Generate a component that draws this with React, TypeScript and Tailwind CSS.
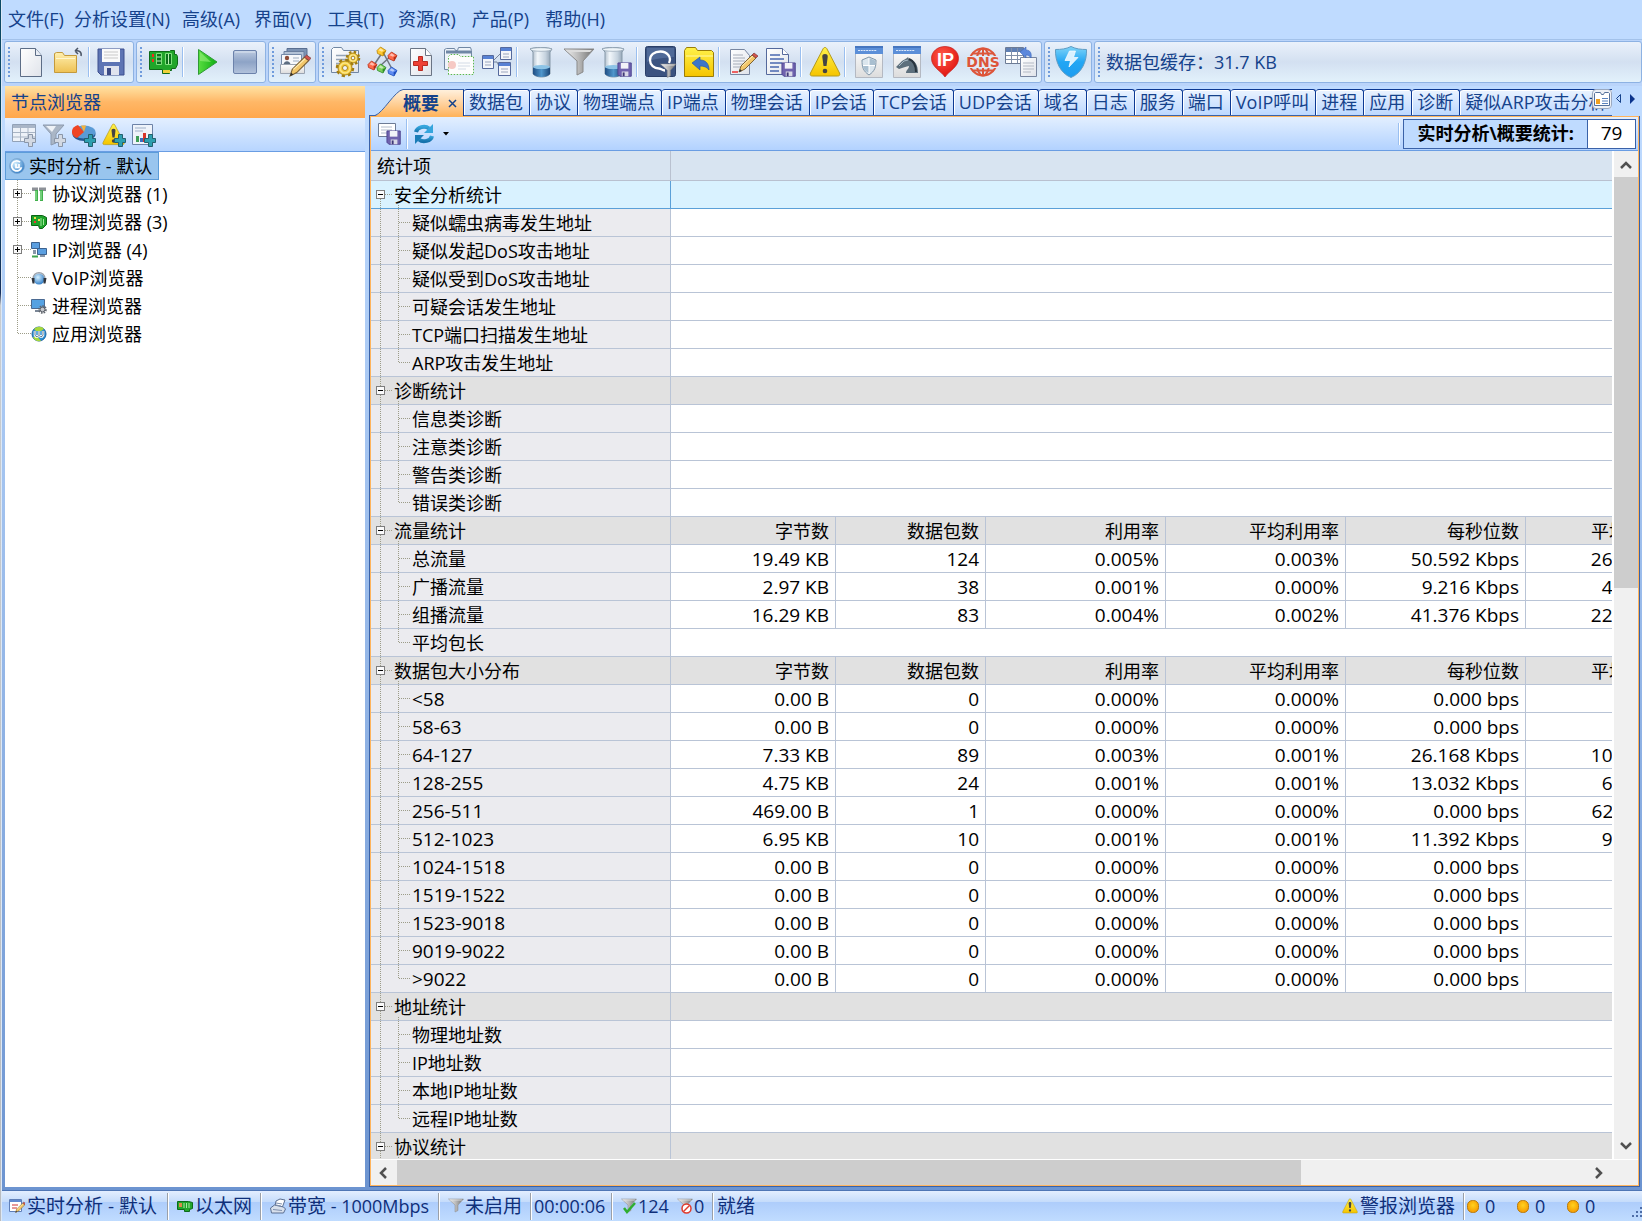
import React from "react";

type P = { children: React.ReactNode; s?: number };
const I = ({ children, s = 32 }: P) => (
  <svg width={s} height={s} viewBox={`0 0 ${s} ${s}`} fill="none" className="block shrink-0" aria-hidden="true">
    {children}
  </svg>
);

const Defs = () => (
  <svg width="0" height="0" className="absolute" aria-hidden="true">
    <defs>
      <linearGradient id="paper" x1="0" y1="0" x2="1" y2="1"><stop offset="0" stopColor="#fff" /><stop offset="1" stopColor="#dfe3ea" /></linearGradient>
      <linearGradient id="fold" x1="0" y1="0" x2="0" y2="1"><stop offset="0" stopColor="#fff0b0" /><stop offset="1" stopColor="#eec153" /></linearGradient>
      <linearGradient id="yel" x1="0" y1="0" x2="0" y2="1"><stop offset="0" stopColor="#fff24a" /><stop offset="1" stopColor="#f5c400" /></linearGradient>
      <linearGradient id="metal" x1="0" y1="0" x2="1" y2="0"><stop offset="0" stopColor="#f4f4f4" /><stop offset=".5" stopColor="#b8b8b8" /><stop offset="1" stopColor="#6f6f6f" /></linearGradient>
      <linearGradient id="glass" x1="0" y1="0" x2="1" y2="0"><stop offset="0" stopColor="#8fa2b4" /><stop offset=".35" stopColor="#f2f7fb" /><stop offset=".7" stopColor="#c6d3df" /><stop offset="1" stopColor="#8497aa" /></linearGradient>
      <linearGradient id="water" x1="0" y1="0" x2="1" y2="0"><stop offset="0" stopColor="#1f4e84" /><stop offset=".5" stopColor="#4f96cc" /><stop offset="1" stopColor="#1b4678" /></linearGradient>
      <linearGradient id="stop" x1="0" y1="0" x2="0" y2="1"><stop offset="0" stopColor="#bccae0" /><stop offset=".5" stopColor="#8da3c6" /><stop offset="1" stopColor="#b3c3dc" /></linearGradient>
      <linearGradient id="play" x1="0" y1="0" x2="1" y2="0"><stop offset="0" stopColor="#58dd40" /><stop offset="1" stopColor="#0fae14" /></linearGradient>
      <linearGradient id="sky" x1="0" y1="0" x2="0" y2="1"><stop offset="0" stopColor="#7fd4f8" /><stop offset=".5" stopColor="#22a6f4" /><stop offset="1" stopColor="#1d9cf0" /></linearGradient>
      <linearGradient id="win" x1="0" y1="0" x2="0" y2="1"><stop offset="0" stopColor="#fff" /><stop offset="1" stopColor="#dcdcdc" /></linearGradient>
      <linearGradient id="swirl" x1="0" y1="0" x2="0" y2="1"><stop offset="0" stopColor="#35a5dd" /><stop offset="1" stopColor="#1673ad" /></linearGradient>
      <radialGradient id="red" cx=".4" cy=".3" r=".7"><stop offset="0" stopColor="#ff5a4a" /><stop offset="1" stopColor="#e0140f" /></radialGradient>
      <radialGradient id="ball" cx=".4" cy=".35" r=".7"><stop offset="0" stopColor="#d6f1ff" /><stop offset="1" stopColor="#2a78c4" /></radialGradient>
      <radialGradient id="dot" cx=".5" cy=".4" r=".6"><stop offset="0" stopColor="#ffd21f" /><stop offset="1" stopColor="#f79a00" /></radialGradient>
    </defs>
  </svg>
);

/* reusable drawing fragments */
const Floppy = ({ x = 0, y = 0, k = 1, c = "#6f62ae" }) => (
  <g transform={`translate(${x} ${y}) scale(${k})`}>
    <path d="M1 1h14v14H3L1 13z" fill={c} stroke="#4d4490" />
    <path d="M4 1h8v6H4z" fill="#f2f2f8" />
    <path d="M5 10h7v5H5z" fill="#d8d8e6" />
    <path d="M6 11h2v4H6z" fill="#3d3775" />
  </g>
);
const Pencil = ({ x = 0, y = 0, k = 1 }) => (
  <g transform={`translate(${x} ${y}) scale(${k})`}>
    <path d="M1 19l2-6L14 2l4 3L7 16z" fill="#f3c76a" stroke="#7d6233" />
    <path d="M4 13L15 3" stroke="#fff0b8" />
    <path d="M14 2l2-2 4 3-2 2z" fill="#d2544c" stroke="#7d3a3a" strokeWidth=".7" />
    <path d="M1 19l1-3 2 2z" fill="#333" />
  </g>
);
const Gear = ({ x, y, r }: { x: number; y: number; r: number }) => (
  <g transform={`translate(${x} ${y})`}>
    <circle r={r} stroke="#a07c10" strokeWidth="2.5" strokeDasharray={`${r * 0.4} ${r * 0.385}`} />
    <circle r={r - 1} fill="#f4cc3c" stroke="#ad8618" />
    <circle r={r - 3} stroke="#fbe68a" strokeWidth="1.5" />
    <circle r={r / 3.2} fill="#eef3fa" stroke="#ad8618" />
  </g>
);
const Cube = ({ x, y, c, d }: { x: number; y: number; c: string; d: string }) => (
  <g transform={`translate(${x} ${y})`}>
    <path d="M0 3.500L3.500 0 9 3.500 6 9 .5 6.500z" fill={c} stroke={d} strokeWidth=".8" />
    <path d="M5.500 5.500l3.500-2L6 9z" fill={d} />
    <path d="M1.500 3.200l2-2 3 2-1.500 1.500z" fill="#fff" opacity=".55" />
  </g>
);
const Funnel = ({ x = 0, y = 0, k = 1 }) => (
  <g transform={`translate(${x} ${y}) scale(${k})`}>
    <path d="M1 2h30L20 14v11l-6 3V14z" fill="url(#metal)" stroke="#8a8a8a" />
    <path d="M3 3h26l-2 2H5z" fill="#dcdcdc" />
  </g>
);
const Beaker = ({ x = 0 }) => (
  <g transform={`translate(${x} 0)`}>
    <path d="M3 3c3-2 18-2 22 0l-2 3v22c-3 4-14 4-17 0V6z" fill="url(#glass)" stroke="#8598a8" />
    <path d="M6 21c4 2 13 2 17 0v7c-3 4-14 4-17 0z" fill="url(#water)" />
    <ellipse cx="14.5" cy="21" rx="8.5" ry="2" fill="#8cc3e6" />
    <ellipse cx="14" cy="3.5" rx="10.5" ry="1.8" fill="#eef4f8" stroke="#93a5b5" strokeWidth=".7" />
  </g>
);
const Warn = ({ k = 1 }) => (
  <g transform={`scale(${k})`}>
    <path d="M16 1.500c1 0 1.500.5 2 1.500L30.500 27c.8 2 0 3-2 3h-25c-2 0-2.800-1-2-3L14 3C14.500 2 15 1.500 16 1.500z" fill="url(#yel)" stroke="#b59a1c" />
    <path d="M16 8c2 0 3 1 2.700 3L17.500 20h-3L13.300 11C13 9 14 8 16 8z" fill="#444" />
    <circle cx="16" cy="25" r="2.300" fill="#444" />
  </g>
);
const Win = ({ x, y, w = 12, h = 13 }: { x: number; y: number; w?: number; h?: number }) => (
  <g transform={`translate(${x} ${y})`}>
    <path d={`M.5.5h${w}v${h}h-${w}z`} fill="#f4f6fa" stroke="#55699c" />
    <path d={`M1 1h${w - 1}v3H1z`} fill="#5781d4" />
    <path d={`M3 7h${w - 5}M3 10h${w - 5}`} stroke="#9aa5bd" />
  </g>
);

const NewDoc = () => <I><path d="M5.500 2.500h15l6 7v21h-21z" fill="url(#paper)" stroke="#5c6d86" /><path d="M20.500 2.500v7h6" fill="#e8edf5" stroke="#5c6d86" /></I>;
const OpenDoc = () => <I><path d="M1.500 26.500v-19l2-1h6l2 3h12v17z" fill="url(#fold)" stroke="#c49a3c" /><path d="M3 12.500h19" stroke="#fff6cf" /><path d="M28 10c1-4-2-6-6-5m0 0l3-3m-3 3l3 3" stroke="#4b5566" strokeWidth="1.500" /></I>;
const Save = () => <I><path d="M1 3h26v26H4l-3-3z" fill="#5d74b4" stroke="#3d4f8e" /><path d="M5 3h18v13H5z" fill="#fafafa" /><path d="M7 6h14M7 9h14M7 12h14" stroke="#c8c8c8" /><path d="M7 20h15v9H7z" fill="#dfe3ee" /><path d="M10 22h4v7h-4z" fill="#3a4a86" /></I>;
const Card = () => <I><path d="M2.500 5.500h20l1-1h4v4h2l1 2v8l-2 4h-4v2h-2v3h-7v-4h-13z" fill="#21a52a" stroke="#0e6a18" /><path d="M16 24h7v3h-7z" fill="#efd13a" /><path d="M5 8h2v3H5zM5 13h2v3H5z" fill="#f42a1c" /><path d="M9.500 7.500h5v11h-5zM18.500 7.500h6v11h-6z" fill="#0c6f1c" stroke="#7ee17c" /><path d="M10 11h4M10 15h4M21.500 8v10" stroke="#b9f0b2" /></I>;
const Play = () => <I><path d="M7.500 3.500L26 16 7.500 28.500z" fill="url(#play)" stroke="#2f9a35" /><path d="M9 6v9l11 1z" fill="#9bf07e" opacity=".6" /></I>;
const Stop = () => <I><rect x="4.500" y="4.500" width="23" height="23" rx="1.500" fill="url(#stop)" stroke="#6c82ab" /><path d="M6 6h20" stroke="#dde6f2" /></I>;
const Contacts = () => <I><path d="M8 2.500h20v13H8z" fill="#7c93b4" stroke="#5a6f91" /><path d="M5 5.500h20v14H5z" fill="#b3c2d6" stroke="#6a7f9f" /><path d="M2.500 8.500h20v12h-20z" fill="#f6f8fb" stroke="#7489a8" /><path d="M14 12h6M14 15h6" stroke="#9dacbf" /><circle cx="8" cy="12" r="2.200" fill="#8d4d3a" /><path d="M4.500 19c0-5 7-5 7 0z" fill="#5d6d80" /><path d="M1.500 18.500h24v9h-24z" fill="url(#win)" stroke="#9aa4b2" /><Pencil x={10} y={9} k={1.100} /></I>;
const Gears = () => <I><path d="M2.500 26.500v-23l2-2h8l2 3h15v22z" fill="url(#paper)" stroke="#7187a3" /><path d="M7 9.500h15M7 13.500h12M7 17.500h7M7 21.500h5" stroke="#93a3b7" strokeWidth="1.500" /><Gear x={24} y={12} r={6} /><Gear x={16} y={22} r={8} /></I>;
const Cubes = () => <I><path d="M15 7L7 19m10-11l8 15M25 9L13 20" stroke="#6d7480" strokeWidth="1.500" /><Cube x={10} y={1} c="#ffc930" d="#b98508" /><Cube x={21} y={6} c="#ff6a4c" d="#b32d17" /><Cube x={1} y={15} c="#ff6a4c" d="#b32d17" /><Cube x={10} y={18} c="#7cd05a" d="#2d8a2a" /><Cube x={21} y={21} c="#5f8cf2" d="#1c4dbb" /></I>;
const PlusDoc = () => <I><path d="M5.500 2.500h15l6 7v20h-21z" fill="url(#paper)" stroke="#6a7484" /><path d="M20.500 2.500v7h6" fill="#fff" stroke="#6a7484" /><path d="M13.500 10.500h4v5h5v4h-5v5h-4v-5h-5v-4h5z" fill="#ee4034" stroke="#b92a20" /></I>;
const Cards = () => <I><path d="M1.500 23.500v-20l2-1h8l1 2h2l1-3h12l1 3v20z" fill="#eef3f9" stroke="#7187a3" /><path d="M3 6h25" stroke="#6f87a5" strokeWidth="3" /><path d="M5.500 28.500v-18l2-2h8l2 2h13v18z" fill="#fdfdfd" stroke="#5cb84d" strokeDasharray="1.500 1.500" /><circle cx="9" cy="19" r="4" fill="#f6c9c4" /><path d="M15 17h12M15 20h12M15 23h8" stroke="#d3dbe6" /></I>;
const Wins = () => <I><path d="M11 16l9-9M11 16h5l4 8" stroke="#77849a" /><Win x={1} y={9} w={11} h={13} /><Win x={19} y={1} w={11} h={12} /><Win x={17} y={16} w={12} h={13} /></I>;
const BeakerI = () => <I><Beaker x={2} /></I>;
const FunnelI = () => <I><Funnel y={1} /></I>;
const BeakerSave = () => <I><Beaker x={-2} /><Floppy x={16} y={16} k={0.950} /></I>;
const Chat = () => <I><rect x=".5" y=".5" width="30" height="30" rx="2" fill="#3b5380" stroke="#2a3f68" /><path d="M2 2h27v9C19 12 10 12 2 16z" fill="#5f79a8" opacity=".6" /><path d="M24 17c3-6-2-11.500-8.500-11.500S5 9 5 14s4 8.500 9 8.500c2 0 3 2 6 2" stroke="#fff" strokeWidth="2.300" /><Funnel x={15} y={17} k={0.520} /></I>;
const BackFolder = () => <I><path d="M1.500 30.500v-26l2-3h9l2 3h14l2 2v24z" fill="url(#yel)" stroke="#9a7d08" /><path d="M3 10h27" stroke="#fff9a8" /><path d="M9 17l8-6v3c6 0 9 4 9 10-2-3-5-4-9-4v4z" fill="#3d76c8" stroke="#2a5aa6" strokeWidth=".7" /></I>;
const DocPencil = () => <I><path d="M3.500 3.500h14l5 6v19h-19z" fill="url(#paper)" stroke="#7886a0" /><path d="M6 9h10M6 12h12M6 15h12M6 18h10M6 21h8" stroke="#a6acb8" /><path d="M5 26h6" stroke="#e33" strokeWidth="1.500" /><Pencil x={11} y={7} k={1} /></I>;
const DocSave = () => <I><path d="M1.500 2.500h16l6 6v20h-22z" fill="url(#paper)" stroke="#55699c" /><path d="M17.500 2.500v6h6" fill="#fff" stroke="#55699c" /><path d="M5 9h10M5 13h14M5 17h12M5 21h9M5 25h9" stroke="#4a68b0" strokeWidth="1.500" /><Floppy x={16} y={16} k={0.950} /></I>;
const WarnI = () => <I><Warn /></I>;
const WinBase = () => <><path d="M2.500 .5h27v31h-27z" fill="url(#win)" stroke="#b4b9c2" /><path d="M2 0h28v8H2z" fill="#5c8fd8" /><path d="M2 0h28v2H2z" fill="#4676c0" /><path d="M5 4.500h19" stroke="#dbe8fa" strokeDasharray="2 .7" /></>;
const ShieldWin = () => <I><WinBase /><path d="M16 11l7 3c0 7-1 11-7 15-6-4-7-8-7-15z" fill="#dbe6ee" stroke="#8197aa" /><path d="M16 12l6 2.500V19h-6zM10 20h6v7c-4-2-5-4-6-7z" fill="#a9bfd0" /><path d="M16 12v16M10 19.500h12" stroke="#fff" /></I>;
const Horse = () => <I><WinBase /><path d="M5 21l6-6 5-3 1-1 1 2c6 1 9 6 9 14H15c0-3 3-4 3-7-3 1-5 1-7 2l-3 1z" fill="#5d6f7c" /><path d="M18 13c5 2 7 6 7 13" stroke="#28343e" strokeWidth="2" /><path d="M8 20l5-5 4-1" stroke="#a9bac6" /></I>;
const IPPin = () => <I><path d="M16 31C12 25 2.500 21 2.500 12.500 2.500 5 9 .5 16 .5s13.500 4.500 13.500 12C29.500 21 20 25 16 31z" fill="url(#red)" stroke="#c3201c" strokeWidth=".7" /><text x="16.500" y="20" textAnchor="middle" fontSize="18" fontWeight="700" fill="#fff" fontFamily="Liberation Sans, sans-serif">IP</text></I>;
const DNS = () => <I><circle cx="16" cy="16" r="13.500" stroke="#dd553a" strokeWidth="2" /><ellipse cx="16" cy="16" rx="6.500" ry="13.500" stroke="#dd553a" strokeWidth="2" /><path d="M16 2v28M5 7.500h22M5 24.500h22" stroke="#dd553a" strokeWidth="2" /><path d="M0 10h32v12H0z" fill="#e2eaf5" /><text x="16" y="21" textAnchor="middle" fontSize="14" fontWeight="700" fill="#dd553a" fontFamily="DejaVu Sans, sans-serif">DNS</text></I>;
const TableDoc = () => <I><path d="M.5 1.500h18v16H.5z" fill="#fff" stroke="#6d7b95" /><path d="M1 2h17v4H1z" fill="#5f7fb4" /><path d="M1 9.500h17M1 13.500h17M6.500 2v15M12.500 2v15" stroke="#8291aa" /><path d="M15.500 11.500h16v19h-16z" fill="url(#paper)" stroke="#7886a0" /><path d="M18 17h11M18 20h11M18 23h11M18 26h8" stroke="#b3b9c4" /><path d="M15 6l6-5v3c4 0 6 3 5 8-1-2-3-3-5-3v3z" fill="#5c88dc" stroke="#3c66b8" strokeWidth=".6" /></I>;
const BlueShield = () => <I><path d="M16 .5c5 2.500 10 3 15.500 3C32 15 27 27 16 31.500 5 27 0 15 .5 3.500 6 3.500 11 3 16 .5z" fill="url(#sky)" stroke="#5f9cc4" /><path d="M14.500 5h6l-2 6.500h4.500L14 21l1.500-6.500H10z" fill="#d9f1ff" stroke="#fff" strokeWidth=".7" /></I>;

const toolGroups: { items: ([string, React.FC] | null)[] }[] = [
  { items: [["新建", NewDoc], ["打开", OpenDoc], null, ["保存", Save]] },
  { items: [["网卡", Card], null, ["开始", Play], ["停止", Stop]] },
  { items: [["名字表", Contacts]] },
  {
    items: [
      ["分析设置", Gears], ["协议", Cubes], ["诊断设置", PlusDoc], ["视图", Cards], ["会话", Wins], null,
      ["缓存", BeakerI], ["过滤器", FunnelI], ["保存缓存", BeakerSave], null,
      ["会话过滤", Chat], ["返回", BackFolder], null,
      ["编辑", DocPencil], ["保存日志", DocSave], null,
      ["警报", WarnI], null,
      ["安全", ShieldWin], ["木马", Horse], ["IP", IPPin], ["DNS", DNS], ["报表", TableDoc],
    ],
  },
  { items: [["防护", BlueShield]] },
];

const groupBox = "flex h-[42px] items-center rounded-[3px] border border-[#8db2e3] bg-gradient-to-b from-[#eaf1fb] via-[#d3e0f1] to-[#e2f1fb]";
const Grip = () => (
  <svg width="7" height="32" className="shrink-0" aria-hidden="true"><path d="M4 1v31" stroke="#6f9bdc" strokeWidth="2" strokeDasharray="2 2" /></svg>
);
const Sep = () => <span className="h-[30px] w-0.5 border-l border-r border-l-[#9abff0] border-r-white" />;

/* small icons */
const Plus = ({ c = "#2d9fb0" }) => <path d="M16.500 11.500h4v4h3v4h-3v4h-4v-4h-4v-4h4z" fill={c} stroke="#23606e" />;
const nodeTools: [string, React.ReactNode][] = [
  ["添加列", <><path d="M.5 1.500h23v17H.5z" fill="#eef2f8" stroke="#92a2b8" /><path d="M1 2h22v3H1z" fill="#a9b6c8" /><path d="M1 9.500h22M1 14h22M8.500 2v16M16 2v16" stroke="#a8b4c4" /><path d="M16.500 11.500h4v4h3v4h-3v4h-4v-4h-4v-4h4z" fill="#d3d9e3" stroke="#8a96a8" /></>],
  ["添加过滤", <><path d="M1 2h21l-8 9v9l-5 2v-11z" fill="#aab6c6" stroke="#8c9aae" /><path d="M4 3h10l-4 6z" fill="#eef2f7" /><path d="M16.500 11.500h4v4h3v4h-3v4h-4v-4h-4v-4h4z" fill="#d3d9e3" stroke="#8a96a8" /></>],
  ["添加图表", <><ellipse cx="12" cy="11" rx="11.500" ry="7" fill="#245a94" /><ellipse cx="12" cy="9" rx="11.500" ry="6.500" fill="#5a9bd6" /><path d="M12 9L6 2C-2 4-2 13 5 15z" fill="#ef4422" /><path d="M12 9L9 2.500h5z" fill="#f6b23c" /><Plus /></>],
  ["添加警报", <><Warn k={0.720} /><Plus /></>],
  ["添加报表", <><path d="M.5 1.500h20v20H.5z" fill="#eef3fa" stroke="#6d83a8" /><path d="M3 5h11M3 8h8" stroke="#9fb0c8" /><path d="M4 13h3v6H4z" fill="#3f9e57" /><path d="M8 15h3v4H8z" fill="#3a6ec0" /><path d="M11 10h3v9h-3z" fill="#d9362c" /><Plus /></>],
];

const S = ({ children }: { children: React.ReactNode }) => <I s={16}>{children}</I>;
const PC = () => <path d="M.5 1.500h13v9h-13z" fill="#56a2e2" stroke="#4b6a92" />;
const RootIcon = () => <S><circle cx="8" cy="8" r="7.500" fill="url(#ball)" stroke="#7aa4cf" strokeWidth=".7" /><path d="M11 4.200a5 5 0 1 0 1.500 5M7 6v3.500h3V6" stroke="#fff" strokeWidth="1.700" /></S>;
const TreeProto = () => <S><path d="M1 1.500h6v3.500H1zM8 1.500h7v3.500H8z" fill="#8d9198" /><path d="M4 4h3v11H4z" fill="#41b04c" /><path d="M9 4h3v11H9z" fill="#41b04c" /><path d="M5 5v9M10 5v9" stroke="#a6ecaa" /></S>;
const TreeCard = () => <S><path d="M.5 1.500h11l4 2v7l-4 4h-3l-1-3h-7z" fill="#1fa32a" stroke="#0b6415" /><path d="M3 3h2v2H3zM7 5h2v2H7z" fill="#f2e04a" /><path d="M3 7h2v2H3z" fill="#e33" /><path d="M10 4v8M12.500 5v6" stroke="#9fe79b" /></S>;
const TreeIP = () => <S><path d="M.5.500h8v6h-8z" fill="#5b9fe0" stroke="#3c628f" /><path d="M6.500 6.500h9v6h-9z" fill="#5b9fe0" stroke="#3c628f" /><path d="M2 8h3v4H2zM9 13h5v2H9z" fill="#8796a8" /><path d="M1 14.500h6" stroke="#3fa34f" strokeWidth="2" /></S>;
const TreeVoip = () => <S><circle cx="8" cy="9" r="5.500" fill="url(#ball)" /><path d="M2 9C2 .5 14 .5 14 9" stroke="#99a1ab" strokeWidth="1.500" /><path d="M.5 8h3v5.500h-2zM12.500 8h3l-1 5.500h-2z" fill="#30353d" /></S>;
const TreeProc = () => <S><PC /><path d="M4 12h5v2H4z" fill="#7b8797" /><circle cx="11.500" cy="11.500" r="3.300" stroke="#60656d" strokeWidth="2" strokeDasharray="1.500 1" /><circle cx="11.500" cy="11.500" r="2.300" fill="#c6c9ce" stroke="#60656d" /></S>;
const TreeApp = () => <S><circle cx="8" cy="8" r="7" fill="#2d8fd4" stroke="#1d639f" /><path d="M3 3c3-3 8-3 10 0l-3 2H5zM2 11l4-1 4 5c-4 1-7-1-8-4z" fill="#a7d83c" /><path d="M4 5v4l1 1.500h1.500L8 9.500l1.500 1H11L12 9V5M8 5v4" stroke="#fff" strokeWidth="2.500" /><path d="M4 5v4l1 1.500h1.500L8 9.500l1.500 1H11L12 9V5M8 5v4" stroke="#2d4a6a" strokeWidth=".7" /></S>;

const Box = ({ x, plus }: { x: number; plus?: boolean }) => (
  <g>
    <rect x={x - 4} y="9.500" width="8" height="8" fill="#fafafa" stroke="#7d7d7d" />
    <path d={`M${x - 2.5} 13.500h5`} stroke="#000" />
    {plus && <path d={`M${x} 11v5`} stroke="#000" />}
  </g>
);
const dots = { stroke: "#9c9c88", strokeDasharray: "1 1" };

const tree: [string, React.FC, boolean][] = [
  ["协议浏览器 (1)", TreeProto, true],
  ["物理浏览器 (3)", TreeCard, true],
  ["IP浏览器 (4)", TreeIP, true],
  ["VoIP浏览器", TreeVoip, false],
  ["进程浏览器", TreeProc, false],
  ["应用浏览器", TreeApp, false],
];

const menus: [string, string][] = [
  ["文件(F)", "mr-2.5"], ["分析设置(N)", "mr-3"], ["高级(A)", "mr-3.5"], ["界面(V)", "mr-4"],
  ["工具(T)", "mr-3.5"], ["资源(R)", "mr-4"], ["产品(P)", "mr-4"], ["帮助(H)", ""],
];

const tabs = ["数据包", "协议", "物理端点", "IP端点", "物理会话", "IP会话", "TCP会话", "UDP会话", "域名", "日志", "服务", "端口", "VoIP呼叫", "进程", "应用", "诊断", "疑似ARP攻击分析"];

type Row = { label: string; vals?: string[] };
type Group = { title: string; cols?: boolean; rows: Row[] };
const z = (label: string): Row => ({ label, vals: ["0.00 B", "0", "0.000%", "0.000%", "0.000 bps", "0.000 bps"] });
const heads = ["字节数", "数据包数", "利用率", "平均利用率", "每秒位数", "平均每秒位数"];
const groups: Group[] = [
  { title: "安全分析统计", rows: ["疑似蠕虫病毒发生地址", "疑似发起DoS攻击地址", "疑似受到DoS攻击地址", "可疑会话发生地址", "TCP端口扫描发生地址", "ARP攻击发生地址"].map((label) => ({ label })) },
  { title: "诊断统计", rows: ["信息类诊断", "注意类诊断", "警告类诊断", "错误类诊断"].map((label) => ({ label })) },
  {
    title: "流量统计", cols: true,
    rows: [
      { label: "总流量", vals: ["19.49 KB", "124", "0.005%", "0.003%", "50.592 Kbps", "26.605 Kbps"] },
      { label: "广播流量", vals: ["2.97 KB", "38", "0.001%", "0.000%", "9.216 Kbps", "4.055 Kbps"] },
      { label: "组播流量", vals: ["16.29 KB", "83", "0.004%", "0.002%", "41.376 Kbps", "22.239 Kbps"] },
      { label: "平均包长" },
    ],
  },
  {
    title: "数据包大小分布", cols: true,
    rows: [
      z("<58"), z("58-63"),
      { label: "64-127", vals: ["7.33 KB", "89", "0.003%", "0.001%", "26.168 Kbps", "10.008 Kbps"] },
      { label: "128-255", vals: ["4.75 KB", "24", "0.001%", "0.001%", "13.032 Kbps", "6.485 Kbps"] },
      { label: "256-511", vals: ["469.00 B", "1", "0.000%", "0.000%", "0.000 bps", "625.333 bps"] },
      { label: "512-1023", vals: ["6.95 KB", "10", "0.001%", "0.001%", "11.392 Kbps", "9.489 Kbps"] },
      z("1024-1518"), z("1519-1522"), z("1523-9018"), z("9019-9022"), z(">9022"),
    ],
  },
  { title: "地址统计", rows: ["物理地址数", "IP地址数", "本地IP地址数", "远程IP地址数"].map((label) => ({ label })) },
  { title: "协议统计", rows: [] },
];

const StatTable = () => (
  <table className="w-[1335px] table-fixed border-separate border-spacing-0 text-black">
    <colgroup>
      <col className="w-[300px]" /><col className="w-[165px]" /><col className="w-[150px]" /><col className="w-[180px]" />
      <col className="w-[180px]" /><col className="w-[180px]" /><col className="w-[180px]" />
    </colgroup>
    <thead>
      <tr className="bg-[#d8e4f1] text-left">
        <th scope="col" className="h-[30px] border-r border-b border-[#b9c1d0] p-0 pt-0.5 pl-1.5 font-normal">统计项</th>
        <th colSpan={6} className="border-b border-[#b9c1d0] p-0"></th>
      </tr>
    </thead>
    <tbody>
      {groups.map((g, gi) => {
        const sel = gi === 0;
        const line = sel ? "border-[#5ba0d8]" : "border-[#b9c4d6]";
        return (
          <React.Fragment key={g.title}>
            <tr className={sel ? "bg-[#d9f2ff]" : "bg-[#e1e1e1]"}>
              <th scope="row" className={`h-7 border-r border-b p-0 text-left font-normal ${line}`}>
                <div className="flex h-[27px] items-center">
                  <svg width="23" height="27" className="shrink-0 overflow-visible" aria-hidden="true">
                    <path d={sel ? "M9.500 18v10" : "M9.500 0v28"} {...dots} />
                    <path d="M14 13.500h8M27.500 24v4" {...dots} />
                    <Box x={9.500} />
                  </svg>
                  <span className="pt-0.5">{g.title}</span>
                </div>
              </th>
              {g.cols
                ? heads.map((h) => <td key={h} className="border-r border-b border-[#b9c4d6] p-0 pr-1.5 text-right leading-[25px] pt-0.5">{h}</td>)
                : <td colSpan={6} className={`border-b p-0 ${line}`}></td>}
            </tr>
            {g.rows.map((r, i) => {
              const last = i === g.rows.length - 1;
              return (
                <tr key={r.label} className="bg-white">
                  <th scope="row" className="h-7 border-r border-b border-[#b9c4d6] bg-[#ebebef] p-0 text-left font-normal">
                    <div className={`flex h-[27px] items-center ${/^[<>\d]/.test(r.label) ? "text-[19px]" : ""}`}>
                      <svg width="41" height="27" className="shrink-0 overflow-visible" aria-hidden="true">
                        <path d="M9.500 0v28" {...dots} />
                        <path d={last ? "M27.500 0v14" : "M27.500 0v28"} {...dots} />
                        <path d="M28 13.500h12" {...dots} />
                      </svg>
                      <span className="pt-0.5">{r.label}</span>
                    </div>
                  </th>
                  {r.vals
                    ? r.vals.map((v, k) => <td key={k} className="border-r border-b border-[#b9c4d6] p-0 pr-1.5 text-right text-[19px] leading-[25px] pt-0.5">{v}</td>)
                    : <td colSpan={6} className="border-b border-[#b9c4d6] p-0"></td>}
                </tr>
              );
            })}
          </React.Fragment>
        );
      })}
    </tbody>
  </table>
);

const Arrow = ({ d }: { d: string }) => (
  <svg width="12" height="12" viewBox="0 0 12 12" fill="none" aria-hidden="true"><path d={d} stroke="#505050" strokeWidth="2.500" /></svg>
);

const StatusSep = () => <span className="h-[27px] w-0.5 shrink-0 border-l border-r border-l-[#9aa0a8] border-r-white" />;
const MiniFunnel = ({ children }: { children?: React.ReactNode }) => <S><Funnel k={0.500} />{children}</S>;

export default function App() {
  return (
    <div className="flex h-screen overflow-hidden bg-[#c5d9f3] font-['Open_Sans','Noto_Sans_CJK_SC',sans-serif] text-lg leading-[27px] text-[#15428b]">
      <Defs />
      <div className="w-px shrink-0 bg-[linear-gradient(#0b4a66,#0c3f5c_17%,#16305e_24%,#c9ccd0_25%,#b9bcc0)]" />
      <div className="w-px shrink-0 bg-[#dce8f6]" />
      <div className="flex min-w-0 flex-1 flex-col bg-gradient-to-b from-[#bfdbff] from-10% to-[#6a92cf]">
        <nav className="flex h-10 shrink-0 items-center border-b border-[#a3c2ea] bg-[#bfdbff] pl-1.5">
          {menus.map(([m, gap]) => <button key={m} className={`whitespace-nowrap ${gap}`}>{m}</button>)}
        </nav>
        <div className="flex h-[46px] shrink-0 gap-0.5 bg-[#bad4fa] pt-px pl-0.5">
          {toolGroups.map((g, i) => (
            <div key={i} className={`shrink-0 pr-px ${groupBox}`} role="toolbar" aria-label="工具栏">
              <Grip />
              {g.items.map((it, k) => {
                if (!it) return <span key={k} className="flex w-1.5 justify-start"><Sep /></span>;
                const [name, Icon] = it;
                return <button key={k} aria-label={name} className="flex h-9 w-[38px] items-center justify-center"><Icon /></button>;
              })}
            </div>
          ))}
          <div className={`min-w-0 flex-1 ${groupBox}`}>
            <Grip />
            <span className="ml-1 whitespace-nowrap">数据包缓存：31.7 KB</span>
          </div>
        </div>

        <main className="flex min-h-0 flex-1 gap-1 pr-0.5 pb-[3px] pl-[3px]">
          <aside className="flex w-[360px] shrink-0 flex-col bg-white">
            <h2 className="flex h-8 shrink-0 items-center bg-gradient-to-b from-[#ffe3a3] via-[#ffb766] to-[#ffa74c] pl-1.5 font-normal">节点浏览器</h2>
            <div className="flex h-[34px] shrink-0 items-center gap-1.5 border-b border-[#6a9de3] bg-gradient-to-b from-[#e3efff] to-[#b7d5ff] pl-[7px]">
              {nodeTools.map(([n, icon]) => (
                <button key={n} aria-label={n}><I s={24}>{icon}</I></button>
              ))}
            </div>
            <ul className="text-black">
              <li>
                <button className="flex h-7 items-center gap-1 border border-[#5c9cd9] bg-[#99c5ee] pr-1.5 pl-[3px]"><RootIcon />实时分析 - 默认</button>
              </li>
              {tree.map(([label, Icon, ex], i) => (
                <li key={label} className="flex h-7 items-center">
                  <svg width="26" height="28" className="shrink-0" aria-hidden="true">
                    <path d={i === tree.length - 1 ? "M12.500 0v14" : "M12.500 0v28"} {...dots} />
                    <path d="M13 13.500h13" {...dots} />
                    {ex && <Box x={12.500} plus />}
                  </svg>
                  <Icon />
                  <span className="ml-[5px]">{label}</span>
                </li>
              ))}
            </ul>
          </aside>

          <section className="flex min-w-0 flex-1 flex-col">
            <div className="relative h-[30px] shrink-0">
              <div role="tablist" className="mr-7 flex h-[30px] items-end overflow-hidden shadow-[inset_0_-1px_0_#3a62a8]">
                <div className="flex h-[27px] shrink-0 items-end">
                  <svg width="34" height="27" fill="none" aria-hidden="true">
                    <path d="M6 27C14 24 26 1 34 .5V27z" fill="url(#tabfill)" />
                    <path d="M0 26.500h6C14 24 26 1.500 34 .5" stroke="#3a62a8" />
                    <defs><linearGradient id="tabfill" x1="0" y1="0" x2="0" y2="1"><stop offset="0" stopColor="#fff0dc" /><stop offset="1" stopColor="#ffb45c" /></linearGradient></defs>
                  </svg>
                  <div className="flex h-[27px] items-center gap-2 border-t border-r border-t-[#3a62a8] border-r-[#0d3a94] bg-gradient-to-b from-[#fff0dc] to-[#ffb45c] pr-[5px]">
                    <button role="tab" aria-selected="true" className="font-bold">概要</button>
                    <button aria-label="关闭" className="p-px"><svg width="9" height="9" aria-hidden="true"><path d="M1 1l7 7M8 1L1 8" stroke="#15428b" strokeWidth="1.500" /></svg></button>
                  </div>
                </div>
                {tabs.map((t) => (
                  <button role="tab" aria-selected="false" key={t} className="mb-px h-[26px] shrink-0 rounded-t-[3px] border-t border-r border-[#0d3a94] bg-gradient-to-b from-[#eaf3ff] to-[#bcd8ff] pr-1.5 pl-[5px] leading-[25px] whitespace-nowrap shadow-[inset_1px_1px_0_#fff]">{t}</button>
                ))}
              </div>
              <div className="absolute top-[3px] right-0 flex items-center">
                <button aria-label="视图列表" className="rounded-sm border border-[#9aa9c0] bg-[#eef1f6] p-px"><S><path d="M.5 14.500v-12l1-1h5l1 2h2l1-2h4l1 1v12z" fill="#fff" stroke="#56729c" /><path d="M2 8h4v5H2z" fill="#f0a020" /><path d="M8 7.500h6M8 10h6M8 12.500h6" stroke="#5a83be" /></S></button>
                <button aria-label="向左" className="w-3.5"><svg width="12" height="12" fill="none" aria-hidden="true"><path d="M8.500 1.500v8L4.500 5.500z" stroke="#15428b" /></svg></button>
                <button aria-label="向右" className="w-3.5"><svg width="12" height="12" aria-hidden="true"><path d="M4 1v10l5-5z" fill="#0a338c" /></svg></button>
              </div>
            </div>

            <div className="flex min-h-0 flex-1 flex-col border-r border-b border-l border-[#3a62a8]">
              <div className="flex min-h-0 flex-1 flex-col border border-[#ffb45c]">
                <div className="flex h-[34px] shrink-0 items-center border-b border-[#6a9de3] bg-gradient-to-b from-[#e3efff] to-[#b2d2ff] pl-1.5">
                  <button aria-label="另存"><I s={24}><path d="M1.500 1.500h17v13h-17z" fill="#fff" stroke="#6d7b95" /><path d="M4 5h11M4 8h11M4 11h7" stroke="#b3bccb" /><Floppy x={9} y={8} k={0.950} /></I></button>
                  <span className="mx-[5px] flex"><Sep /></span>
                  <button aria-label="刷新" className="flex items-center gap-2">
                    <I s={22}><path d="M3 9c1-5 9-7 13-3.500" stroke="url(#swirl)" strokeWidth="4" /><path d="M20 1v9h-9z" fill="#35a5dd" /><path d="M19 13c-1 5-9 7-13 3.500" stroke="url(#swirl)" strokeWidth="4" /><path d="M2 21v-9h9z" fill="#1a7cb8" /></I>
                    <svg width="6" height="4" aria-hidden="true"><path d="M0 0h6L3 3.500z" fill="#000" /></svg>
                  </button>
                  <div className="mr-0.5 ml-auto flex items-center gap-[3px]">
                    <span className="flex h-[22px]"><span className="w-0.5 border-l border-r border-l-[#9abff0] border-r-white" /></span>
                    <div className="flex h-[30px] items-center border border-[#3a62a8] bg-[#bfdbff] text-black">
                      <span className="px-[13px] font-bold">实时分析\概要统计:</span>
                      <span className="flex h-full w-12 items-center justify-center border-l border-[#3a62a8] bg-white text-[19px]">79</span>
                    </div>
                  </div>
                </div>

                <div className="flex min-h-0 flex-1 bg-white">
                  <div className="min-w-0 flex-1 overflow-hidden"><StatTable /></div>
                  <div className="flex w-[26px] shrink-0 flex-col border-l-2 border-white bg-[#f0f0f0]">
                    <button aria-label="向上滚动" className="flex h-[26px] shrink-0 items-center justify-center"><Arrow d="M1 10l5-5 5 5" /></button>
                    <div className="min-h-0 flex-1"><div className="h-[43%] bg-[#cdcdcd]" /></div>
                    <button aria-label="向下滚动" className="flex h-[26px] shrink-0 items-center justify-center"><Arrow d="M1 3l5 5 5-5" /></button>
                  </div>
                </div>
                <div className="flex h-[26px] shrink-0 border-t border-white bg-[#f0f0f0] pr-[26px]">
                  <button aria-label="向左滚动" className="flex w-[26px] shrink-0 items-center justify-center"><Arrow d="M8 1L3 6l5 5" /></button>
                  <div className="min-w-0 flex-1"><div className="h-full w-[76%] bg-[#cdcdcd]" /></div>
                  <button aria-label="向右滚动" className="flex w-[26px] shrink-0 items-center justify-center"><Arrow d="M3 1l5 5-5 5" /></button>
                </div>
              </div>
            </div>
          </section>
        </main>

        <footer className="flex h-[31px] shrink-0 items-center border-t border-[#4f76b5] bg-[linear-gradient(#e3eeff,#c5dcfb_36%,#aecdfb_38%,#c0dcff)] text-[19px] whitespace-nowrap text-[#0f2f7a]">
          <span className="flex w-[165px] items-center gap-0.5 pl-[7px]">
            <S><path d="M.5 1.500h12v12H.5z" fill="#fff" stroke="#5f7fb8" /><path d="M1 2h11v2H1z" fill="#5f8ad0" /><path d="M3 7h6M3 10h5" stroke="#c33" /><Pencil x={6} y={4} k={0.550} /></S>实时分析 - 默认
          </span>
          <StatusSep />
          <span className="flex w-[91px] items-center gap-0.5 pl-2">
            <S><path d="M.5 3.500h11l4 1v6l-3 1v2h-5v-2h-7z" fill="#22a52b" stroke="#0d6a18" /><path d="M2 5h3v4H2z" fill="#d98b4a" /><path d="M7 5v5M9.500 5v5M12 5v5" stroke="#a9eaa4" /></S>以太网
          </span>
          <StatusSep />
          <span className="flex w-[176px] items-center gap-0.5 pl-2">
            <S><path d="M6 3l4-2 5 1-3 8-7-2z" fill="#fff" stroke="#5b6f92" /><path d="M.5 10l4-3 9 2 2 2-2 4h-12z" fill="#d8e0ec" stroke="#5b6f92" /><path d="M3 11.500l9 1M6 5l6 1M6 7l5 1" stroke="#7f90ae" /></S><span>带宽<span className="text-lg"> - 1000Mbps</span></span>
          </span>
          <StatusSep />
          <span className="flex w-[90px] items-center gap-px pl-2"><MiniFunnel />未启用</span>
          <StatusSep />
          <span className="w-[79px] pl-0.5 text-lg">00:00:06</span>
          <StatusSep />
          <span className="flex w-[99px] items-center gap-px pl-2 text-lg">
            <MiniFunnel><path d="M3 10l3 4 8-9" stroke="#2fae2f" strokeWidth="2.500" /></MiniFunnel>
            <span className="w-[38px]">124</span>
            <MiniFunnel><circle cx="9.500" cy="10.500" r="4.500" fill="#fff" stroke="#e03a2c" strokeWidth="1.500" /><path d="M6.500 13.500l6-6" stroke="#e03a2c" strokeWidth="1.500" /></MiniFunnel>0
          </span>
          <StatusSep />
          <span className="pl-[3px]">就绪</span>
          <span className="ml-auto flex items-center gap-0.5 pr-2"><S><Warn k={0.500} /></S>警报浏览器</span>
          <StatusSep />
          {[0, 1, 2].map((n) => (
            <span key={n} className="flex w-[50px] items-center gap-1.5 pl-0.5 text-lg">
              <svg width="12" height="13" aria-hidden="true"><rect x=".5" y=".5" width="11" height="12" rx="5" fill="url(#dot)" stroke="#b77a10" /></svg>0
            </span>
          ))}
          <svg width="27" height="28" className="shrink-0" aria-hidden="true"><path d="M17 23h2v2h-2zM21 23h2v2h-2zM25 23h2v2h-2zM21 19h2v2h-2zM25 19h2v2h-2zM25 15h2v2h-2z" fill="#4d6da8" /></svg>
        </footer>
      </div>
    </div>
  );
}
